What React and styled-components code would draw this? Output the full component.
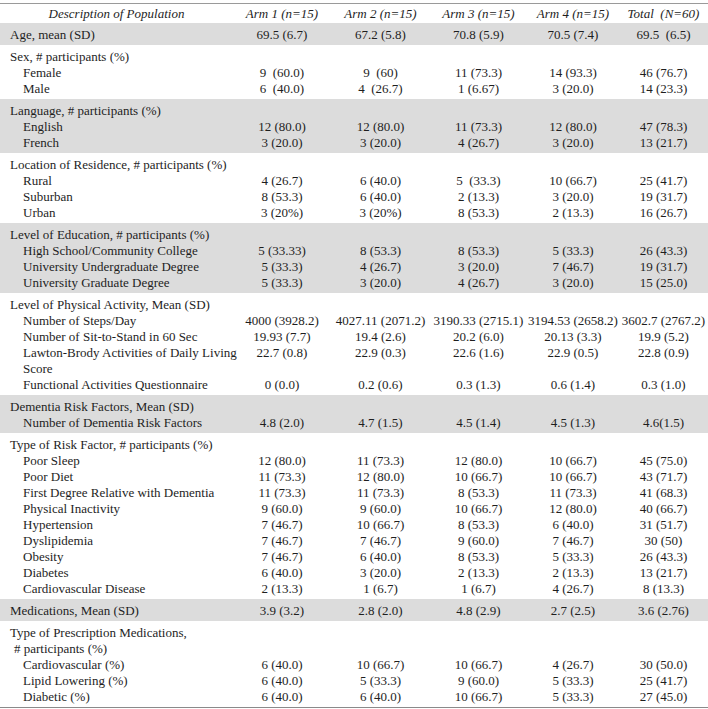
import React from "react";
import styled, { createGlobalStyle } from "styled-components";

const Global = createGlobalStyle`
  html, body { margin: 0; padding: 0; background: #fff; }
  body { font-family: "Liberation Serif", "Times New Roman", serif; }
`;

const Page = styled.div`
  width: 708px;
  padding-top: 3px;
`;

const Table = styled.table`
  width: 708px;
  border-collapse: collapse;
  table-layout: fixed;
  font-family: "Liberation Serif", "Times New Roman", serif;
  font-size: 13px;
  color: #1e1e1e;
`;

const Col = styled.col`
  width: ${(p) => p.$w}px;
`;

const HeadRow = styled.tr`
  border-top: 1px solid #9a9a9a;
`;

const HeadCell = styled.th`
  font-weight: normal;
  font-style: italic;
  text-align: center;
  height: 19px;
  padding: 0;
  line-height: 16px;
  white-space: pre;
`;

const Section = styled.tbody`
  background: ${(p) => (p.$shaded ? "#dcdcdc" : "#ffffff")};
  ${(p) => (p.$last ? "border-bottom: 1px solid #8a8a8a;" : "")}
  & > tr:first-child > td { padding-top: 4px; }
  & > tr:last-child > td { padding-bottom: 2px; }
`;

const Label = styled.td`
  padding: 0 0 0 ${(p) => (p.$indent === 2 ? 23 : p.$indent === 1 ? 14 : 10)}px;
  line-height: 16px;
  text-align: left;
  vertical-align: top;
  white-space: nowrap;
`;

const Value = styled.td`
  padding: 0;
  line-height: 16px;
  text-align: center;
  vertical-align: top;
  white-space: pre;
`;

const sections = [
  {
    shaded: true,
    rows: [{ label: "Age, mean (SD)", vals: ["69.5 (6.7)", "67.2 (5.8)", "70.8 (5.9)", "70.5 (7.4)", "69.5  (6.5)"] }],
  },
  {
    title: "Sex, # participants (%)",
    rows: [
      { label: "Female", vals: ["9  (60.0)", "9  (60)", "11 (73.3)", "14 (93.3)", "46 (76.7)"] },
      { label: "Male", vals: ["6  (40.0)", "4  (26.7)", "1 (6.67)", "3 (20.0)", "14 (23.3)"] },
    ],
  },
  {
    shaded: true,
    title: "Language, # participants (%)",
    rows: [
      { label: "English", vals: ["12 (80.0)", "12 (80.0)", "11 (73.3)", "12 (80.0)", "47 (78.3)"] },
      { label: "French", vals: ["3 (20.0)", "3 (20.0)", "4 (26.7)", "3 (20.0)", "13 (21.7)"] },
    ],
  },
  {
    title: "Location of Residence, # participants (%)",
    rows: [
      { label: "Rural", vals: ["4 (26.7)", "6 (40.0)", "5  (33.3)", "10 (66.7)", "25 (41.7)"] },
      { label: "Suburban", vals: ["8 (53.3)", "6 (40.0)", "2 (13.3)", "3 (20.0)", "19 (31.7)"] },
      { label: "Urban", vals: ["3 (20%)", "3 (20%)", "8 (53.3)", "2 (13.3)", "16 (26.7)"] },
    ],
  },
  {
    shaded: true,
    title: "Level of Education, # participants (%)",
    rows: [
      { label: "High School/Community College", vals: ["5 (33.33)", "8 (53.3)", "8 (53.3)", "5 (33.3)", "26 (43.3)"] },
      { label: "University Undergraduate Degree", vals: ["5 (33.3)", "4 (26.7)", "3 (20.0)", "7 (46.7)", "19 (31.7)"] },
      { label: "University Graduate Degree", vals: ["5 (33.3)", "3 (20.0)", "4 (26.7)", "3 (20.0)", "15 (25.0)"] },
    ],
  },
  {
    title: "Level of Physical Activity, Mean (SD)",
    rows: [
      { label: "Number of Steps/Day", vals: ["4000 (3928.2)", "4027.11 (2071.2)", "3190.33 (2715.1)", "3194.53 (2658.2)", "3602.7 (2767.2)"] },
      { label: "Number of Sit-to-Stand in 60 Sec", vals: ["19.93 (7.7)", "19.4 (2.6)", "20.2 (6.0)", "20.13 (3.3)", "19.9 (5.2)"] },
      { label: ["Lawton-Brody Activities of Daily Living", "Score"], vals: ["22.7 (0.8)", "22.9 (0.3)", "22.6 (1.6)", "22.9 (0.5)", "22.8 (0.9)"] },
      { label: "Functional Activities Questionnaire", vals: ["0 (0.0)", "0.2 (0.6)", "0.3 (1.3)", "0.6 (1.4)", "0.3 (1.0)"] },
    ],
  },
  {
    shaded: true,
    title: "Dementia Risk Factors, Mean (SD)",
    rows: [{ label: "Number of Dementia Risk Factors", vals: ["4.8 (2.0)", "4.7 (1.5)", "4.5 (1.4)", "4.5 (1.3)", "4.6(1.5)"] }],
  },
  {
    title: "Type of Risk Factor, # participants (%)",
    rows: [
      { label: "Poor Sleep", vals: ["12 (80.0)", "11 (73.3)", "12 (80.0)", "10 (66.7)", "45 (75.0)"] },
      { label: "Poor Diet", vals: ["11 (73.3)", "12 (80.0)", "10 (66.7)", "10 (66.7)", "43 (71.7)"] },
      { label: "First Degree Relative with Dementia", vals: ["11 (73.3)", "11 (73.3)", "8 (53.3)", "11 (73.3)", "41 (68.3)"] },
      { label: "Physical Inactivity", vals: ["9 (60.0)", "9 (60.0)", "10 (66.7)", "12 (80.0)", "40 (66.7)"] },
      { label: "Hypertension", vals: ["7 (46.7)", "10 (66.7)", "8 (53.3)", "6 (40.0)", "31 (51.7)"] },
      { label: "Dyslipidemia", vals: ["7 (46.7)", "7 (46.7)", "9 (60.0)", "7 (46.7)", "30 (50)"] },
      { label: "Obesity", vals: ["7 (46.7)", "6 (40.0)", "8 (53.3)", "5 (33.3)", "26 (43.3)"] },
      { label: "Diabetes", vals: ["6 (40.0)", "3 (20.0)", "2 (13.3)", "2 (13.3)", "13 (21.7)"] },
      { label: "Cardiovascular Disease", vals: ["2 (13.3)", "1 (6.7)", "1 (6.7)", "4 (26.7)", "8 (13.3)"] },
    ],
  },
  {
    shaded: true,
    rows: [{ label: "Medications, Mean (SD)", vals: ["3.9 (3.2)", "2.8 (2.0)", "4.8 (2.9)", "2.7 (2.5)", "3.6 (2.76)"] }],
  },
  {
    title: "Type of Prescription Medications,",
    subtitle: "# participants (%)",
    last: true,
    rows: [
      { label: "Cardiovascular (%)", vals: ["6 (40.0)", "10 (66.7)", "10 (66.7)", "4 (26.7)", "30 (50.0)"] },
      { label: "Lipid Lowering (%)", vals: ["6 (40.0)", "5 (33.3)", "9 (60.0)", "5 (33.3)", "25 (41.7)"] },
      { label: "Diabetic (%)", vals: ["6 (40.0)", "6 (40.0)", "10 (66.7)", "5 (33.3)", "27 (45.0)"] },
    ],
  },
];

const headers = ["Arm 1 (n=15)", "Arm 2 (n=15)", "Arm 3 (n=15)", "Arm 4 (n=15)", "Total  (N=60)"];
const widths = [233, 98, 99, 97, 92, 89];

function EmptyCells() {
  return [0, 1, 2, 3, 4].map((i) => <Value key={i} />);
}

export default function App() {
  return (
    <Page>
      <Global />
      <Table>
        <colgroup>
          {widths.map((w, i) => (
            <Col key={i} $w={w} />
          ))}
        </colgroup>
        <thead>
          <HeadRow>
            <HeadCell>Description of Population</HeadCell>
            {headers.map((h) => (
              <HeadCell key={h}>{h}</HeadCell>
            ))}
          </HeadRow>
        </thead>
        {sections.map((s, si) => (
          <Section key={si} $shaded={s.shaded} $last={s.last}>
            {s.title && (
              <tr>
                <Label $indent={0}>{s.title}</Label>
                <EmptyCells />
              </tr>
            )}
            {s.subtitle && (
              <tr>
                <Label $indent={1}>{s.subtitle}</Label>
                <EmptyCells />
              </tr>
            )}
            {s.rows.map((r, ri) => (
              <tr key={ri}>
                <Label $indent={s.title ? 2 : 0}>
                  {Array.isArray(r.label) ? (
                    <>
                      {r.label[0]}
                      <br />
                      {r.label[1]}
                    </>
                  ) : (
                    r.label
                  )}
                </Label>
                {r.vals.map((v, vi) => (
                  <Value key={vi}>{v}</Value>
                ))}
              </tr>
            ))}
          </Section>
        ))}
      </Table>
    </Page>
  );
}
